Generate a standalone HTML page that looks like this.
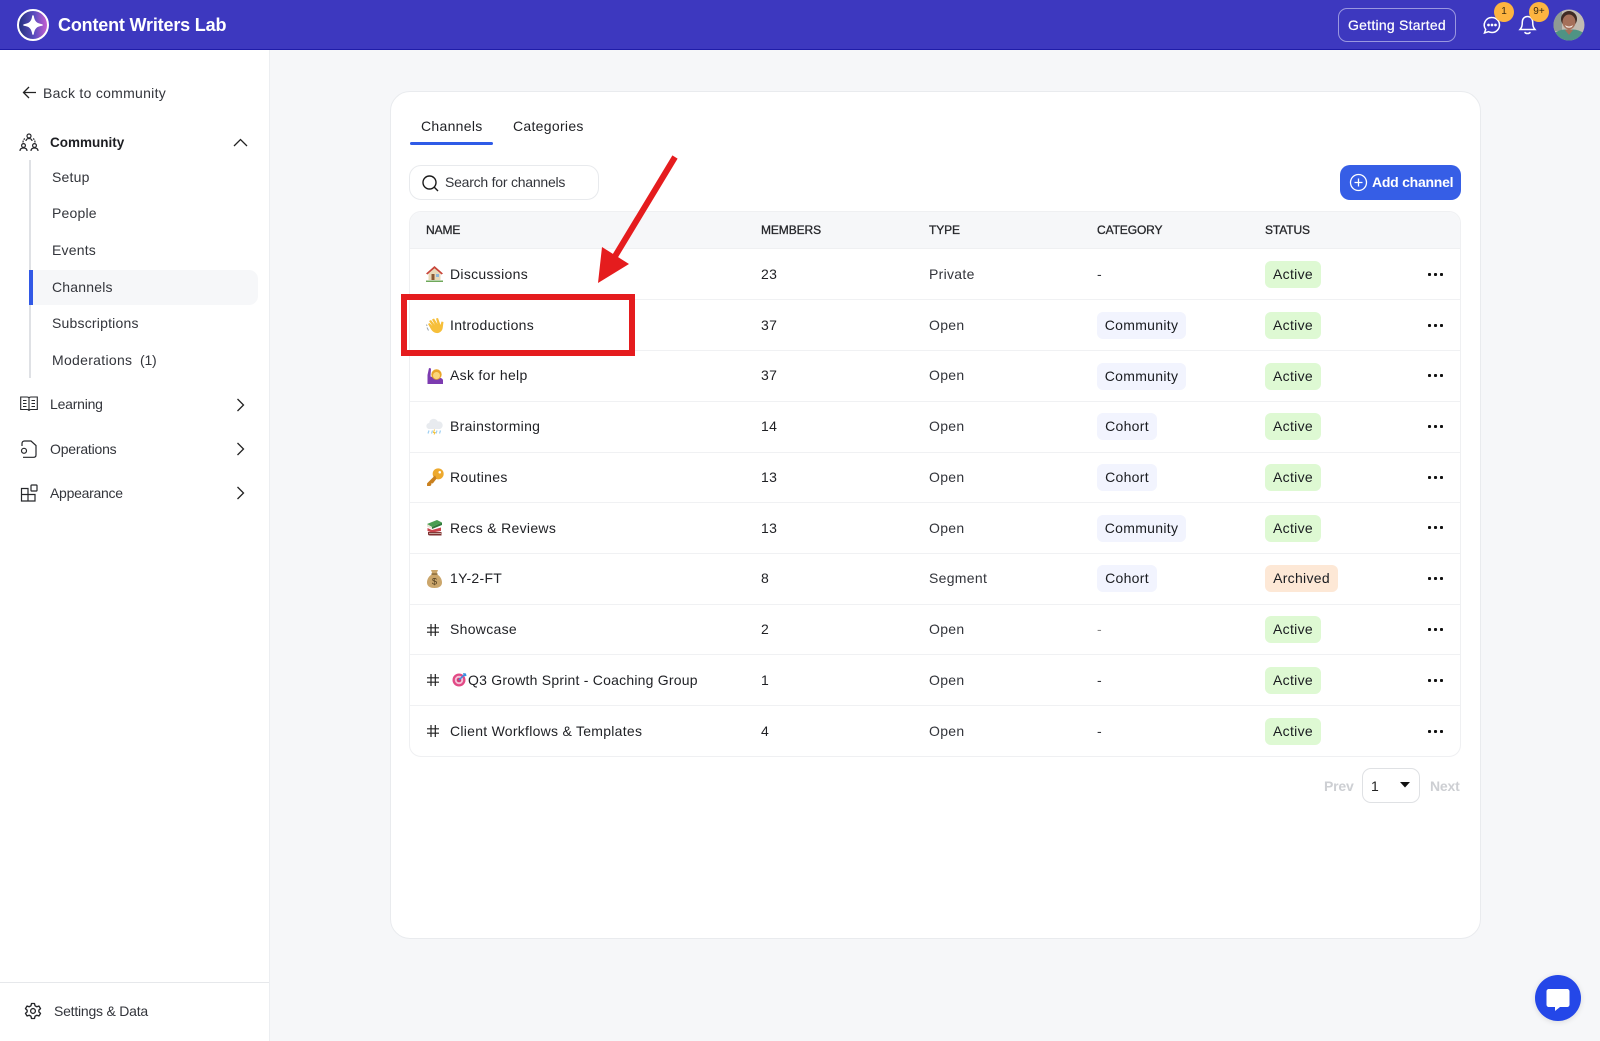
<!DOCTYPE html>
<html><head><meta charset="utf-8"><title>Content Writers Lab</title>
<style>
*{box-sizing:border-box}
html,body{margin:0;padding:0}
body{width:1600px;height:1041px;position:relative;overflow:hidden;background:#f6f7f9;font-family:"Liberation Sans",sans-serif;color:#1f2024;font-size:14px}
.a{position:absolute}
.t{position:absolute;line-height:20px;height:20px;white-space:nowrap;letter-spacing:.3px}
.sb{color:#33353b}
.h{position:absolute;top:220px;line-height:20px;font-size:12px;letter-spacing:-.1px;color:#26272b;font-weight:normal;-webkit-text-stroke:.3px #26272b}
.line{position:absolute;left:410px;width:1050px;height:1px;background:#f0f1f3}
.pill{position:absolute;height:27px;line-height:27px;border-radius:6px;text-align:center;letter-spacing:.3px;color:#1a1c20}
.act{background:#def9d3;left:1265px;width:56px}
.arch{background:#fde8d6;left:1265px;width:73px}
.com{background:#f2f4fe;left:1097px;width:89px}
.coh{background:#f2f4fe;left:1097px;width:60px}
.dots{position:absolute;left:1428px;width:15px;height:3px;background:radial-gradient(circle at 1.5px 1.5px,#111 1.5px,transparent 1.8px) 0 0/6px 3px repeat-x}
svg{position:absolute;overflow:visible}
</style></head><body>

<!-- header -->
<div class="a" style="left:0;top:0;width:1600px;height:50px;background:#3d38bf;border-bottom:1px solid #1f1ca8"></div>
<div class="a" style="left:17px;top:9px;width:32px;height:32px;border-radius:50%;border:2px solid #fff;background:linear-gradient(90deg,#26327f,#5b4cc0 55%,#c55fd0)"></div>
<svg style="left:17px;top:9px" width="32" height="32" viewBox="0 0 32 32"><path d="M16 7C16.800 12.800 19.200 15.200 25 16 19.200 16.800 16.800 19.200 16 25 15.200 19.200 12.800 16.800 7 16 12.800 15.200 15.200 12.800 16 7Z" fill="#fff" stroke="#fff" stroke-width="1.600" stroke-linejoin="round"/></svg>
<div class="t" style="left:58px;top:15px;color:#fff;font-weight:bold;font-size:18px;letter-spacing:-.18px">Content Writers Lab</div>

<div class="a" style="left:1338px;top:8px;width:118px;height:34px;border:1px solid #9a97e0;border-radius:9px"></div>
<div class="t" style="left:1348px;top:15px;color:#fff;letter-spacing:.25px;-webkit-text-stroke:.2px #fff">Getting Started</div>
<svg style="left:1483px;top:16px" width="18" height="18" viewBox="0 0 18 18" fill="none" stroke="#fff" stroke-width="1.500"><path d="M9 1.500a7.500 7.500 0 0 1 0 15c-1.300 0-2.500-.3-3.500-.8L1.500 17l1.200-3.600A7.500 7.500 0 0 1 9 1.500Z"/><circle cx="5.500" cy="9" r=".6" fill="#fff"/><circle cx="9" cy="9" r=".6" fill="#fff"/><circle cx="12.500" cy="9" r=".6" fill="#fff"/></svg>
<div class="a" style="left:1494px;top:2px;width:20px;height:20px;border-radius:50%;background:#fdb440;color:#3a2a10;font-size:10px;line-height:20px;text-align:center">1</div>
<svg style="left:1519px;top:15px" width="17" height="20" viewBox="0 0 17 20" fill="none" stroke="#fff" stroke-width="1.500"><path d="M8.500 1.500c-3.300 0-5.200 2.500-5.200 5.500 0 4-.6 5.500-2.300 7.500h15c-1.700-2-2.300-3.500-2.300-7.500 0-3-1.900-5.500-5.200-5.500Z"/><path d="M6 17.500c.6 1.300 4.400 1.300 5 0" stroke-linecap="round"/></svg>
<div class="a" style="left:1529px;top:2px;width:20px;height:20px;border-radius:50%;background:#fdb440;color:#3a2a10;font-size:10px;line-height:20px;text-align:center">9+</div>
<svg style="left:1553px;top:9px" width="32" height="32" viewBox="0 0 32 32"><defs><clipPath id="av"><circle cx="16" cy="16" r="15.500"/></clipPath></defs><g clip-path="url(#av)"><rect width="32" height="32" fill="#c2bcb2"/><rect x="0" y="0" width="9" height="22" fill="#8f9a94"/><ellipse cx="16" cy="10" rx="8" ry="8" fill="#3f2b24"/><ellipse cx="16" cy="13" rx="6.500" ry="7.500" fill="#a5705a"/><path d="M12 16q4 3 8 0l-1 2q-3 1.500-6 0Z" fill="#f3e4dc"/><path d="M0 32V25q8-6 16-4 8-2 16 4v7Z" fill="#4f9384"/><path d="M12 21l4 5 4-5-4-1Z" fill="#a5705a"/></g></svg>

<!-- sidebar -->
<div class="a" style="left:0;top:50px;width:270px;height:991px;background:#fff;border-right:1px solid #eceef1"></div>
<svg style="left:22px;top:85px" width="15" height="15" viewBox="0 0 15 15" fill="none" stroke="#222" stroke-width="1.300"><path d="M14 7.500H1.500M7 2 1.500 7.500 7 13"/></svg>
<div class="t sb" style="left:43px;top:83px;letter-spacing:.28px">Back to community</div>

<svg style="left:19px;top:132px" width="20" height="20" viewBox="0 0 20 20" fill="none" stroke="#26272b" stroke-width="1.200"><circle cx="10" cy="4" r="2"/><path d="M7 9c0-1.500 1.300-2.500 3-2.500s3 1 3 2.500"/><circle cx="4.500" cy="13.500" r="1.900"/><path d="M1 19c0-2 1.500-3 3.500-3S8 17 8 19"/><circle cx="15.500" cy="13.500" r="1.900"/><path d="M12 19c0-2 1.500-3 3.500-3s3.500 1 3.500 3"/><path d="M4 10.500c0-1.500.5-3 1.800-4M16 10.500c0-1.500-.5-3-1.800-4" stroke-dasharray="2 1"/></svg>
<div class="t" style="left:50px;top:133px;font-weight:bold;font-size:13.500px;letter-spacing:0;color:#1d1e22">Community</div>
<svg style="left:233px;top:138px" width="15" height="9" viewBox="0 0 15 9" fill="none" stroke="#222" stroke-width="1.300"><path d="M1 8 7.500 1.500 14 8"/></svg>

<div class="a" style="left:29px;top:160px;width:2px;height:218px;background:#dfe1e5"></div>
<div class="a" style="left:33px;top:270px;width:225px;height:35px;background:#f6f7f9;border-radius:0 9px 9px 0"></div>
<div class="a" style="left:29px;top:270px;width:4px;height:35px;background:#3259e6"></div>
<div class="t sb" style="left:52px;top:167px;letter-spacing:.2px">Setup</div>
<div class="t sb" style="left:52px;top:203px;letter-spacing:.2px">People</div>
<div class="t sb" style="left:52px;top:240px;letter-spacing:.2px">Events</div>
<div class="t sb" style="left:52px;top:277px;letter-spacing:.2px">Channels</div>
<div class="t sb" style="left:52px;top:313px;letter-spacing:.2px">Subscriptions</div>
<div class="t sb" style="left:52px;top:350px">Moderations</div>
<div class="t sb" style="left:140px;top:350px;letter-spacing:-.2px">(1)</div>

<svg style="left:20px;top:396px" width="18" height="17" viewBox="0 0 18 17" fill="none" stroke="#26272b" stroke-width="1.100"><path d="M.7 1h6.300c1.200 0 2 .5 2 1.500C9 1.500 9.800 1 11 1h6.300v12.500H11c-1.200 0-2 .5-2 1.500 0-1-.8-1.500-2-1.500H.7ZM9 2.500V15"/><path d="M3 4.500h3.500M3 7.500h3.500M3 10.500h3.500M11.500 4.500H15M11.500 7.500H15M11.500 10.500H15"/></svg>
<div class="t sb" style="left:50px;top:394px;letter-spacing:-.22px">Learning</div>
<svg style="left:236px;top:398px" width="9" height="14" viewBox="0 0 9 14" fill="none" stroke="#222" stroke-width="1.300"><path d="M1.500 1 7.500 7 1.500 13"/></svg>

<svg style="left:20px;top:440px" width="17" height="18" viewBox="0 0 17 18" fill="none" stroke="#26272b" stroke-width="1.200"><path d="M2 6V3.500C2 2 3 1 4.500 1H11l5 4.500V15c0 1.500-1 2.300-2.500 2.300H3"/><circle cx="4" cy="10.800" r="2.500"/></svg>
<div class="t sb" style="left:50px;top:439px;letter-spacing:-.2px">Operations</div>
<svg style="left:236px;top:442px" width="9" height="14" viewBox="0 0 9 14" fill="none" stroke="#222" stroke-width="1.300"><path d="M1.500 1 7.500 7 1.500 13"/></svg>

<svg style="left:20px;top:484px" width="18" height="18" viewBox="0 0 18 18" fill="none" stroke="#26272b" stroke-width="1.200"><path d="M1.500 4.500H8V17H1.500ZM1.500 10.500H15V17H8"/><rect x="11" y="1" width="6" height="6" rx=".8"/></svg>
<div class="t sb" style="left:50px;top:483px;letter-spacing:-.28px">Appearance</div>
<svg style="left:236px;top:486px" width="9" height="14" viewBox="0 0 9 14" fill="none" stroke="#222" stroke-width="1.300"><path d="M1.500 1 7.500 7 1.500 13"/></svg>

<div class="a" style="left:0;top:982px;width:269px;height:1px;background:#e6e8eb"></div>
<svg style="left:24px;top:1002px" width="18" height="18" viewBox="0 0 24 24" fill="none" stroke="#26272b" stroke-width="1.800"><circle cx="12" cy="12" r="3.200"/><path d="M10 2h4l.7 3 2.300 1.300 3-.9 2 3.400-2.200 2.100v2.200l2.200 2.100-2 3.400-3-.9L14.700 19 14 22h-4l-.7-3L7 17.700l-3 .9-2-3.400 2.200-2.100V11L2 8.800l2-3.400 3 .9L9.300 5Z" stroke-linejoin="round"/></svg>
<div class="t sb" style="left:54px;top:1001px;letter-spacing:-.22px">Settings &amp; Data</div>

<!-- card -->
<div class="a" style="left:390px;top:91px;width:1091px;height:848px;background:#fff;border:1px solid #e9ebee;border-radius:20px"></div>
<div class="t" style="left:421px;top:116px">Channels</div>
<div class="a" style="left:410px;top:142px;width:83px;height:3px;border-radius:2px;background:#2f5be7"></div>
<div class="t" style="left:513px;top:116px">Categories</div>

<div class="a" style="left:409px;top:165px;width:190px;height:35px;border:1px solid #e8eaed;border-radius:12px;background:#fff"></div>
<svg style="left:422px;top:175px" width="17" height="17" viewBox="0 0 17 17" fill="none" stroke="#1a1a1a" stroke-width="1.400"><circle cx="7.500" cy="7.500" r="6.500"/><path d="M12.300 12.300 16 16"/></svg>
<div class="t sb" style="left:445px;top:172px;letter-spacing:-.23px">Search for channels</div>

<div class="a" style="left:1340px;top:165px;width:121px;height:35px;background:#365ee6;border-radius:10px"></div>
<svg style="left:1349px;top:173px" width="19" height="19" viewBox="0 0 19 19" fill="none" stroke="#fff" stroke-width="1.300"><circle cx="9.500" cy="9.500" r="8"/><path d="M9.500 5.500v8M5.500 9.500h8"/></svg>
<div class="t" style="left:1372px;top:172px;color:#fff;font-weight:bold;letter-spacing:-.25px">Add channel</div>

<!-- table -->
<div class="a" style="left:409px;top:211px;width:1052px;height:546px;border:1px solid #eff0f2;border-radius:12px;background:#fff"></div>
<div class="a" style="left:410px;top:212px;width:1050px;height:37px;background:#f6f7f9;border-radius:11px 11px 0 0;border-bottom:1px solid #eff0f2"></div>
<div class="h" style="left:426px">NAME</div>
<div class="h" style="left:761px">MEMBERS</div>
<div class="h" style="left:929px">TYPE</div>
<div class="h" style="left:1097px">CATEGORY</div>
<div class="h" style="left:1265px">STATUS</div>

<div class="line" style="top:299px"></div><div class="line" style="top:350px"></div><div class="line" style="top:401px"></div><div class="line" style="top:452px"></div><div class="line" style="top:502px"></div><div class="line" style="top:553px"></div><div class="line" style="top:604px"></div><div class="line" style="top:654px"></div><div class="line" style="top:705px"></div>

<!-- row icons -->
<svg style="left:426px;top:265px" width="17" height="17" viewBox="0 0 17 17"><path d="M8.500 1 0 8.500l1.500 1L8.500 3.500l7 6 1.500-1Z" fill="#c8453a"/><path d="M2.500 8.500 8.500 3.500l6 5V15h-12Z" fill="#e8d9b8"/><rect x="5.500" y="9" width="3" height="6" fill="#8a5a34"/><rect x="10" y="9" width="3" height="3" fill="#8cb6d8"/><path d="M0 15.500h17v1.500H0Z" fill="#6fa85a"/></svg>
<svg style="left:426px;top:316px" width="18" height="18" viewBox="0 0 18 18"><path d="M5 4 9 9 6 3.500 8 2.500 11.500 8 10 2.500l2-.5 2.500 7 1-3.500 2 .5-.8 6c-.5 3-3 5.500-6.500 5-2-.3-3.700-1.500-5-3.500L2 8l1.500-1 3 3L3 5Z" fill="#f6bf3a"/><path d="M1 11.500l1.500 3M.5 8.500 1 10" stroke="#9aa4ad" fill="none"/></svg>
<svg style="left:426px;top:367px" width="17" height="17" viewBox="0 0 17 17"><path d="M1.500 17V8L3 1l2 .5-.5 8 3.500 1-1 6.500Z" fill="#7c3bb0"/><path d="M5 17v-3.500c0-2 2.500-3 6-3s6 1 6 3V17Z" fill="#7c3bb0"/><circle cx="10.500" cy="7.500" r="5.200" fill="#e9a52a"/><circle cx="10.500" cy="8.500" r="3.500" fill="#fbd67a"/></svg>
<svg style="left:426px;top:418px" width="17" height="17" viewBox="0 0 17 17"><path d="M3.500 11a3 3 0 0 1-.3-6 4.500 4.500 0 0 1 8.600-1.500A3.700 3.700 0 0 1 13.800 11Z" fill="#e8ebef"/><path d="M3 12.500l-1 3M6.500 12.500l-1 3M11 12.500l-1 3M14.500 12.500l-1 3" stroke="#9fd0f2" stroke-width="1.200"/><path d="M8.500 11.500l-1 3h1.500l-1 2" stroke="#f5c23a" fill="none" stroke-width="1"/></svg>
<svg style="left:426px;top:468px" width="18" height="18" viewBox="0 0 17 17"><circle cx="11.500" cy="5.500" r="5.200" fill="#eda92e"/><circle cx="13" cy="4" r="1.200" fill="#fff"/><path d="M8.500 7 1 14.500V17h3l1-1v-1.500h1.500L10 10Z" fill="#c9801e"/></svg>
<svg style="left:426px;top:519px" width="17" height="17" viewBox="0 0 17 17"><path d="M1 5 11 1l5 2.500L6 8Z" fill="#4a9e52"/><path d="M1 5v2.500L6 10V8Z" fill="#e9e3d5"/><path d="M6 8v2l10-4V3.500Z" fill="#2f7a3a"/><path d="M1.500 9 6 11l9-2.500V12l-9 1.500L1.500 12Z" fill="#c9434b"/><path d="M2 13h13.500v3.500H4c-1.500 0-2-.5-2-1.500Z" fill="#7d3030"/><path d="M3 14.300h12" stroke="#e9e3d5" stroke-width=".7"/></svg>
<svg style="left:427px;top:570px" width="15" height="18" viewBox="0 0 15 18"><path d="M4 0h7L9.500 4c3.500 1.800 5.500 5 5.500 8.500 0 3-2 5.500-7.500 5.500S0 15.500 0 12.500C0 9 2 5.800 5.500 4Z" fill="#cba66b"/><rect x="4.500" y="3.300" width="6" height="1.500" fill="#8a6a39"/><text x="7.500" y="14.500" font-size="9" text-anchor="middle" fill="#4d3a1c" font-family="Liberation Sans">$</text></svg>

<svg style="left:427px;top:624px" width="12" height="12" viewBox="0 0 12 12" fill="none" stroke="#222" stroke-width="1.200"><path d="M4 0v12M8.300 0v12M0 3.800h12M0 8.200h12"/></svg>
<svg style="left:427px;top:674px" width="12" height="12" viewBox="0 0 12 12" fill="none" stroke="#222" stroke-width="1.200"><path d="M4 0v12M8.300 0v12M0 3.800h12M0 8.200h12"/></svg>
<svg style="left:427px;top:725px" width="12" height="12" viewBox="0 0 12 12" fill="none" stroke="#222" stroke-width="1.200"><path d="M4 0v12M8.300 0v12M0 3.800h12M0 8.200h12"/></svg>
<svg style="left:452px;top:672px" width="15" height="15" viewBox="0 0 15 15"><circle cx="7" cy="8" r="6.500" fill="#e24a86"/><circle cx="7" cy="8" r="4.200" fill="#f4c2d6"/><circle cx="7" cy="8" r="2.300" fill="#d53a76"/><path d="M7 8 12.500 2.500" stroke="#3c8fe0" stroke-width="1.500"/><path d="M11 1l3 .5.500 2.500-2.500.3Z" fill="#3c8fe0"/></svg>

<!-- row 1 -->
<div class="t" style="left:450px;top:264px">Discussions</div><div class="t" style="left:761px;top:264px">23</div><div class="t sb" style="left:929px;top:264px">Private</div><div class="t sb" style="left:1097px;top:264px">-</div><div class="pill act" style="top:261px">Active</div><div class="dots" style="top:273px"></div>
<!-- row 2 -->
<div class="t" style="left:450px;top:315px">Introductions</div><div class="t" style="left:761px;top:315px">37</div><div class="t sb" style="left:929px;top:315px">Open</div><div class="pill com" style="top:312px">Community</div><div class="pill act" style="top:312px">Active</div><div class="dots" style="top:324px"></div>
<!-- row 3 -->
<div class="t" style="left:450px;top:365px">Ask for help</div><div class="t" style="left:761px;top:365px">37</div><div class="t sb" style="left:929px;top:365px">Open</div><div class="pill com" style="top:363px">Community</div><div class="pill act" style="top:363px">Active</div><div class="dots" style="top:374px"></div>
<!-- row 4 -->
<div class="t" style="left:450px;top:416px">Brainstorming</div><div class="t" style="left:761px;top:416px">14</div><div class="t sb" style="left:929px;top:416px">Open</div><div class="pill coh" style="top:413px">Cohort</div><div class="pill act" style="top:413px">Active</div><div class="dots" style="top:425px"></div>
<!-- row 5 -->
<div class="t" style="left:450px;top:467px">Routines</div><div class="t" style="left:761px;top:467px">13</div><div class="t sb" style="left:929px;top:467px">Open</div><div class="pill coh" style="top:464px">Cohort</div><div class="pill act" style="top:464px">Active</div><div class="dots" style="top:476px"></div>
<!-- row 6 -->
<div class="t" style="left:450px;top:518px">Recs &amp; Reviews</div><div class="t" style="left:761px;top:518px">13</div><div class="t sb" style="left:929px;top:518px">Open</div><div class="pill com" style="top:515px">Community</div><div class="pill act" style="top:515px">Active</div><div class="dots" style="top:526px"></div>
<!-- row 7 -->
<div class="t" style="left:450px;top:568px">1Y-2-FT</div><div class="t" style="left:761px;top:568px">8</div><div class="t sb" style="left:929px;top:568px">Segment</div><div class="pill coh" style="top:565px">Cohort</div><div class="pill arch" style="top:565px">Archived</div><div class="dots" style="top:577px"></div>
<!-- row 8 -->
<div class="t" style="left:450px;top:619px">Showcase</div><div class="t" style="left:761px;top:619px">2</div><div class="t sb" style="left:929px;top:619px">Open</div><div class="t sb" style="left:1097px;top:619px;color:#888">-</div><div class="pill act" style="top:616px">Active</div><div class="dots" style="top:628px"></div>
<!-- row 9 -->
<div class="t" style="left:468px;top:670px;letter-spacing:.22px">Q3 Growth Sprint - Coaching Group</div><div class="t" style="left:761px;top:670px">1</div><div class="t sb" style="left:929px;top:670px">Open</div><div class="t sb" style="left:1097px;top:670px">-</div><div class="pill act" style="top:667px">Active</div><div class="dots" style="top:679px"></div>
<!-- row 10 -->
<div class="t" style="left:450px;top:721px;letter-spacing:.27px">Client Workflows &amp; Templates</div><div class="t" style="left:761px;top:721px">4</div><div class="t sb" style="left:929px;top:721px">Open</div><div class="t sb" style="left:1097px;top:721px">-</div><div class="pill act" style="top:718px">Active</div><div class="dots" style="top:730px"></div>

<!-- pagination -->
<div class="t" style="left:1324px;top:776px;color:#cdcfd3;font-weight:bold;letter-spacing:-.2px">Prev</div>
<div class="a" style="left:1362px;top:768px;width:58px;height:35px;border:1px solid #dfe1e4;border-radius:9px;background:#fff"></div>
<div class="t" style="left:1371px;top:776px;color:#222">1</div>
<svg style="left:1400px;top:782px" width="10" height="6" viewBox="0 0 10 6"><path d="M0 0h10L5 5.500Z" fill="#111"/></svg>
<div class="t" style="left:1430px;top:776px;color:#cdcfd3;font-weight:bold;letter-spacing:-.2px">Next</div>

<!-- annotation -->
<div class="a" style="left:401px;top:294px;width:234px;height:62px;border:6px solid #e51c1e"></div>
<svg style="left:0;top:0" width="1600" height="1041"><polygon points="672.400,155.400 677.600,158.600 618.100,257.100 629,264 598,283 602,247 612.900,253.900" fill="#e51c1e"/></svg>

<!-- chat -->
<div class="a" style="left:1535px;top:975px;width:46px;height:46px;border-radius:50%;background:#2447e8;box-shadow:0 1px 6px rgba(0,0,0,.12)"></div>
<svg style="left:1546px;top:988px" width="24" height="24" viewBox="0 0 24 24"><path d="M3 1h18c1.500 0 2.500 1 2.500 2.500v13c0 1.500-1 2.500-2.500 2.500h-7l-5 4v-4H3c-1.500 0-2.500-1-2.500-2.500v-13C.5 2 1.500 1 3 1Z" fill="#fff"/></svg>
</body></html>
